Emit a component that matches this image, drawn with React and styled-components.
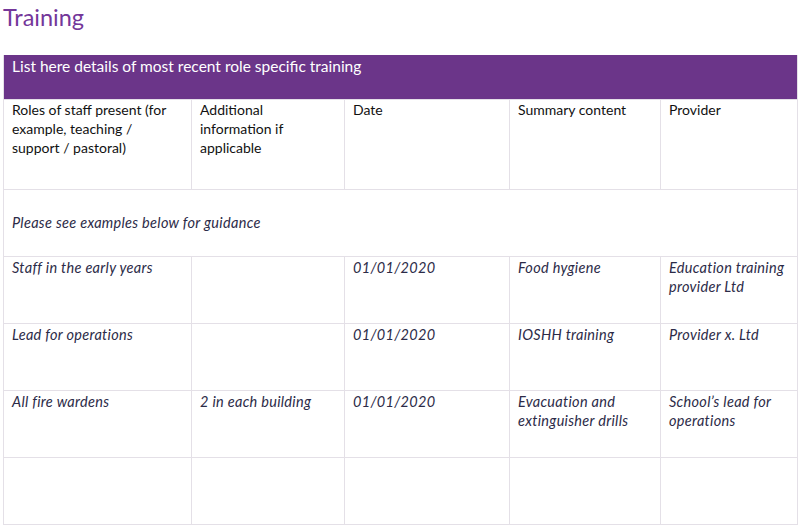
import React from "react";
import styled, { createGlobalStyle } from "styled-components";

const GlobalStyle = createGlobalStyle`
  body {
    margin: 0;
    background: #ffffff;
    font-family: Lato, "Open Sans", sans-serif;
  }
`;

const purple = "#6b3589";
const ink = "#2c2b48";
const line = "#e4e0e7";

const columns = [
    { label: "Roles of staff present (for example, teaching / support / pastoral)", width: 188 },
    { label: "Additional information if applicable", width: 153 },
    { label: "Date", width: 165 },
    { label: "Summary content", width: 151 },
    { label: "Provider", width: 137 },
];

const examples = [
    ["Staff in the early years", "", "01/01/2020", "Food hygiene", "Education training provider Ltd"],
    ["Lead for operations", "", "01/01/2020", "IOSHH training", "Provider x. Ltd"],
    ["All fire wardens", "2 in each building", "01/01/2020", "Evacuation and extinguisher drills", "School\u2019s lead for operations"],
    ["", "", "", "", ""],
];

export default function App() {
    return (
        <Page>
            <GlobalStyle />
            <Title>Training</Title>
            <Table>
                <colgroup>
                    {columns.map((c, i) => <col key={i} style={{ width: c.width }} />)}
                </colgroup>
                <tbody>
                    <tr>
                        <Banner colSpan={5}>List here details of most recent role specific training</Banner>
                    </tr>
                    <Row height={90}>
                        {columns.map((c, i) => <Cell key={i}>{c.label}</Cell>)}
                    </Row>
                    <Row height={67}>
                        <Guidance colSpan={5}>Please see examples below for guidance</Guidance>
                    </Row>
                    {examples.map((row, r) => (
                        <Row height={67} key={r}>
                            {row.map((text, i) => <Cell key={i} italic>{text}</Cell>)}
                        </Row>
                    ))}
                </tbody>
            </Table>
        </Page>
    );
}

const Page = styled.div`
    width: 800px;
    height: 528px;
    overflow: hidden;
    padding: 0 3px;
    box-sizing: border-box;
`;

const Title = styled.h1`
    margin: 0;
    padding: 3px 0 0 0;
    height: 55px;
    box-sizing: border-box;
    font-weight: 400;
    font-size: 23.5px;
    line-height: 28px;
    color: #74379a;
`;

const Table = styled.table`
    width: 794px;
    table-layout: fixed;
    border-collapse: collapse;
    border-left: 1px solid ${line};
    border-right: 1px solid ${line};
`;

const Banner = styled.td`
    background: ${purple};
    color: #ffffff;
    height: 44px;
    padding: 2px 8px 0 8px;
    box-sizing: border-box;
    vertical-align: top;
    font-size: 15.5px;
    line-height: 19px;
`;

const Row = styled.tr`
    height: ${({ height }) => height}px;
`;

const Cell = styled.td`
    border: 1px solid ${line};
    padding: ${({ italic }) => italic ? "1px" : "0"} 8px 0 8px;
    vertical-align: top;
    font-size: ${({ italic }) => italic ? "14.5px" : "14px"};
    letter-spacing: ${({ italic }) => italic ? "0.3px" : "0"};
    line-height: 19px;
    color: ${({ italic }) => italic ? ink : "#111111"};
    font-style: ${({ italic }) => italic ? "italic" : "normal"};
`;

const Guidance = styled.td`
    border: 1px solid ${line};
    padding: 0 8px;
    vertical-align: middle;
    font-size: 14.5px;
    letter-spacing: 0.3px;
    line-height: 19px;
    font-style: italic;
    color: ${ink};
`;
